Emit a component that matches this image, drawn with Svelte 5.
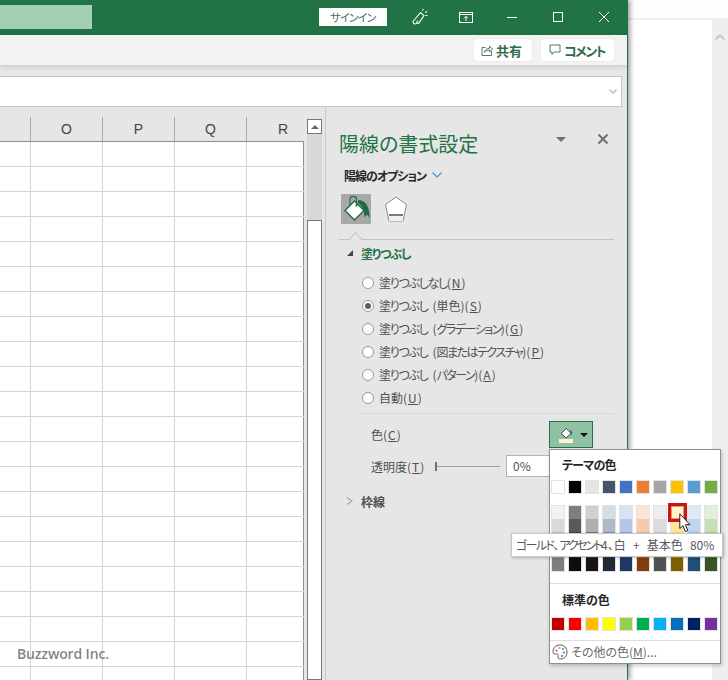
<script>
  const columns = ['O', 'P', 'Q', 'R'];
  const rows = Array.from({ length: 22 }, (_, i) => i);

  // tightHead / tightNote: kana runs that sit narrower than the font's own widths
  const radios = [
    { head: '塗りつぶしなし', tightHead: true, key: 'N' },
    { head: '塗りつぶし', tightHead: true, note: '単色', key: 'S', checked: true },
    { head: '塗りつぶし', tightHead: true, note: 'グラデーション', tightNote: true, key: 'G' },
    { head: '塗りつぶし', tightHead: true, note: '図またはテクスチャ', tightNote: true, key: 'P' },
    { head: '塗りつぶし', tightHead: true, note: 'パターン', tightNote: true, key: 'A' },
    { head: '自動', key: 'U' }
  ];

  const themeColors = ['#ffffff', '#000000', '#e7e6e6', '#44546a', '#4472c4', '#ed7d31', '#a5a5a5', '#ffc000', '#5b9bd5', '#70ad47'];
  const tints = [
    ['#f2f2f2', '#d9d9d9', '#bfbfbf', '#a6a6a6', '#7f7f7f'],
    ['#7f7f7f', '#595959', '#404040', '#262626', '#0d0d0d'],
    ['#d0d0d0', '#aeaeae', '#767676', '#3b3b3b', '#171717'],
    ['#d6dce4', '#adb9ca', '#8497b0', '#333f4f', '#222b35'],
    ['#d9e2f3', '#b4c6e7', '#8eaadb', '#2f5496', '#1f3864'],
    ['#fbe4d5', '#f7caac', '#f4b083', '#c55a11', '#833c0b'],
    ['#ededed', '#dbdbdb', '#c9c9c9', '#7b7b7b', '#525252'],
    ['#fff2cc', '#ffe599', '#ffd966', '#bf9000', '#7f6000'],
    ['#deeaf6', '#bdd6ee', '#9cc2e5', '#2e74b5', '#1f4e79'],
    ['#e2efd9', '#c5e0b3', '#a8d08d', '#538135', '#375623']
  ];
  const standardColors = ['#c00000', '#ff0000', '#ffc000', '#ffff00', '#92d050', '#00b050', '#00b0f0', '#0070c0', '#002060', '#7030a0'];
</script>

<div class="screen">
  <div class="window">
    <header class="titlebar">
      <div class="namebox"></div>
      <button class="signin">サインイン</button>
      <svg class="tb-icon coauthor" viewBox="0 0 18 18" width="18" height="18" fill="none" stroke="#fff" stroke-width="1.1">
        <path d="M2 13.5 9.5 4.5 13 7.5 7.5 15.5 5.8 14.8 4.8 16 2.5 15.5 Z" />
        <path d="M5.5 14.5 7 12.5M11.5 2.5 12.2 1M14 4.5 16 3.5M14.5 7.5 16.5 7.5" />
      </svg>
      <svg class="tb-icon display" viewBox="0 0 14 11" width="14" height="11" fill="none" stroke="#fff" stroke-width="1">
        <rect x="0.5" y="0.5" width="13" height="10" />
        <path d="M0.5 2.5H13.5M7 9V4.5M5 6.3 7 4.3 9 6.3" />
      </svg>
      <svg class="tb-icon minimize" viewBox="0 0 10 10" width="10" height="10" stroke="#fff" stroke-width="1"><path d="M0 5.5H10" /></svg>
      <svg class="tb-icon maximize" viewBox="0 0 10 10" width="10" height="10" fill="none" stroke="#fff" stroke-width="1"><rect x="0.5" y="0.5" width="9" height="9" /></svg>
      <svg class="tb-icon close" viewBox="0 0 10 10" width="10" height="10" stroke="#fff" stroke-width="1"><path d="M0 0 10 10M10 0 0 10" /></svg>
    </header>

    <div class="ribbon">
      <button class="rb-btn share">
        <svg viewBox="0 0 12 12" width="12" height="12" fill="none" stroke="#4f7f66" stroke-width="1">
          <path d="M4.5 3.5H1V11.5H10.5V7" />
          <path d="M3.5 8.5C4 5.5 6 4.3 8.5 4.3V2L11.5 5 8.5 8V6C6.5 6 5 6.8 3.5 8.5Z" />
        </svg>
        共有
      </button>
      <button class="rb-btn comment">
        <svg viewBox="0 0 12 12" width="12" height="12" fill="none" stroke="#4f7f66" stroke-width="1">
          <path d="M1 1H11V8H5L3 10.5V8H1Z" />
        </svg>
        コメント
      </button>
    </div>

    <div class="workspace">
      <div class="formula">
        <svg viewBox="0 0 8 5" width="8" height="5" fill="none" stroke="#c4c4c4" stroke-width="1.6"><path d="M0.5 0.5 4 4 7.5 0.5" /></svg>
      </div>

      <div class="main">
        <div class="sheet">
          <div class="col-head">
            <div class="head-cell first"></div>
            {#each columns as col}
              <div class="head-cell">{col}</div>
            {/each}
          </div>
          <div class="cells">
            {#each rows as row (row)}
              <div class="cell first"></div>
              {#each columns as col (col)}
                <div class="cell"></div>
              {/each}
            {/each}
          </div>
        </div>

        <div class="scrollbar">
          <div class="sb-up"><span class="sb-arrow"></span></div>
          <div class="sb-thumb"></div>
        </div>

        <aside class="pane">
          <div class="pane-title">
            <h1>陽線の書式設定</h1>
            <span class="pane-menu"></span>
            <svg class="pane-close" viewBox="0 0 10 10" width="10" height="10" stroke="#6e6e6e" stroke-width="2"><path d="M0.5 0.5 9.5 9.5M9.5 0.5 0.5 9.5" /></svg>
          </div>

          <div class="options">
            陽線のオプション
            <svg viewBox="0 0 10 6" width="10" height="6" fill="none" stroke="#4a90d0" stroke-width="1.1"><path d="M0.5 0.5 5 5 9.5 0.5" /></svg>
          </div>

          <div class="tabs">
            <div class="tab selected">
              <svg viewBox="0 0 30 30" width="30" height="30">
                <path d="M17 6C24 6 29 12 28.5 24L26 20.5 23 23.5C24 18 22 12 17 9Z" fill="#1f6b43" />
                <path d="M13.5 7 23 16.5 13.5 26 4 16.5Z" fill="#fff" stroke="#1f6b43" stroke-width="1.4" />
                <path d="M9 11V5C9 1.5 15.5 1.5 15.5 5V11" fill="none" stroke="#1f6b43" stroke-width="1.1" />
                <circle cx="15.5" cy="11.5" r="1.1" fill="#1f6b43" />
              </svg>
            </div>
            <div class="tab">
              <svg viewBox="0 0 30 30" width="30" height="30">
                <path d="M15 3 25.5 10.5 22 27H8L4.5 10.5Z" fill="#fff" stroke="#8a8a8a" stroke-width="1" />
                <path d="M8 21H22" stroke="#7a7a7a" stroke-width="2" />
                <path d="M8.6 22H21.4L22 27H8Z" fill="#f0f0f0" />
              </svg>
            </div>
          </div>

          <div class="tab-rule"><span class="notch"></span></div>

          <div class="section open">
            <span class="tri-open"></span>
            塗りつぶし
          </div>

          <div class="radios">
            {#each radios as r}
              <label class="radio">
                <span class="dot" class:checked={r.checked}></span>
                <span><span class:tight={r.tightHead}>{r.head}</span>{#if r.note}<span class="note">(<span class:tight-note={r.tightNote}>{r.note}</span>)</span>{/if}<span class="key">(<u>{r.key}</u>)</span></span>
              </label>
            {/each}
          </div>

          <div class="inner-rule"></div>

          <div class="form-row color-row">
            <span class="form-label">色<span class="key">(<u>C</u>)</span></span>
            <div class="color-btn">
              <svg viewBox="0 0 18 16" width="18" height="16">
                <path d="M9.5 1.5 14 6.5 9 11 4 6.5Z" fill="#fff" stroke="#444" stroke-width="1" />
                <path d="M13 2.5C15 4 15.5 6 15 8L13.5 6.5Z" fill="#1f6b8c" />
                <rect x="2" y="12" width="14" height="4" fill="#fff2cc" />
              </svg>
              <span class="caret"></span>
            </div>
          </div>

          <div class="form-row alpha-row">
            <span class="form-label">透明度<span class="key">(<u>T</u>)</span></span>
            <div class="slider"><span class="tick"></span></div>
            <div class="pct">0%</div>
          </div>

          <div class="section closed">
            <span class="tri-closed"></span>
            枠線
          </div>
        </aside>
      </div>
    </div>
  </div>

  <div class="outside">
    <div class="out-top"></div>
    <div class="out-body">
      <div class="out-page"></div>
      <div class="out-strip">
        <svg viewBox="0 0 10 6" width="10" height="6" fill="none" stroke="#c4c4c4" stroke-width="1.8"><path d="M0.5 5.5 5 1 9.5 5.5" /></svg>
      </div>
    </div>
  </div>

  <div class="watermark">Buzzword Inc.</div>

  <div class="popup">
    <div class="pop-head theme">テーマの色</div>
    <div class="swatches">
      {#each themeColors as c}
        <span class="swatch" style="background:{c}"></span>
      {/each}
    </div>
    <div class="swatches tints">
      {#each tints as col, i}
        <div class="tint-col">
          {#each col as c}
            <span class="tint" style="background:{c}"></span>
          {/each}
          {#if i === 7}<span class="picked"></span>{/if}
        </div>
      {/each}
    </div>
    <div class="pop-rule"></div>
    <div class="pop-head std">標準の色</div>
    <div class="swatches std-row">
      {#each standardColors as c}
        <span class="swatch" style="background:{c}"></span>
      {/each}
    </div>
    <div class="pop-rule more-rule"></div>
    <div class="more">
      <svg viewBox="0 0 16 16" width="16" height="16">
        <path d="M8 1C3.5 1 1 4 1 7.5 1 10 3 10.5 4.5 10 6 9.5 6.5 11 6 12.5 5.5 14.5 7 15 8.5 15 12.5 15 15 12 15 8 15 4 12 1 8 1Z" fill="#fff" stroke="#5a5a5a" stroke-width="1" />
        <circle cx="4.5" cy="6.5" r="1.1" fill="#c8504a" />
        <circle cx="7.5" cy="4" r="1.1" fill="#e0a030" />
        <circle cx="11" cy="5" r="1.1" fill="#5a9a50" />
        <circle cx="12" cy="8.5" r="1.1" fill="#4a7fc0" />
        <circle cx="10" cy="12" r="1.1" fill="#8a5aa8" />
      </svg>
      <span>その他の色(<u>M</u>)...</span>
    </div>
  </div>

  <div class="tooltip"><span class="tip-a">ゴールド</span>、<span class="tip-b">アクセント</span><span class="tip-gap"> </span>4、白 + 基本色 80%</div>

  <svg class="cursor" viewBox="0 0 12 20" width="12" height="20">
    <path d="M0.8 0.8V15.5L4 12.6 6.3 18.6 8.8 17.6 6.5 11.7H11Z" fill="#fff" stroke="#222" stroke-width="1" />
  </svg>
</div>

<style>
  :global(body) {
    margin: 0;
    background: #fff;
  }
  .screen {
    position: relative;
    display: flex;
    width: 728px;
    height: 680px;
    overflow: hidden;
    font-family: "Noto Sans CJK JP", "Liberation Sans", sans-serif;
    font-size: 12px;
    font-feature-settings: "palt";
    color: #505050;
  }
  u {
    text-underline-offset: 1px;
  }
  button {
    font-family: inherit;
    font-feature-settings: inherit;
    border: none;
    padding: 0;
  }

  /* window */
  .window {
    position: relative;
    z-index: 1;
    display: flex;
    flex-direction: column;
    width: 627px;
    height: 680px;
    border-right: 1px solid #217346;
    box-shadow: 2px 0 5px rgba(0, 0, 0, 0.4);
  }
  .titlebar {
    display: flex;
    align-items: center;
    flex: none;
    height: 35px;
    background: #217346;
  }
  .namebox {
    width: 92px;
    height: 24px;
    margin-top: -1px;
    background: #a3cfb4;
  }
  .signin {
    width: 68px;
    height: 18px;
    margin-left: 227px;
    margin-top: -1px;
    background: #fff;
    color: #41705a;
    font-size: 11px;
    letter-spacing: -0.8px;
    line-height: 18px;
  }
  .tb-icon {
    flex: none;
  }
  .coauthor { margin-left: 24px; margin-top: -1px; }
  .display { margin-left: 30px; margin-top: -1px; }
  .minimize { margin-left: 34px; margin-top: -1px; }
  .maximize { margin-left: 36px; margin-top: -1px; }
  .close { margin-left: 36px; margin-top: -1px; }

  .ribbon {
    display: flex;
    flex: none;
    justify-content: flex-end;
    align-items: center;
    gap: 9px;
    height: 30px;
    padding-right: 13px;
    background: #f3f2f1;
    box-shadow: 0 2px 5px rgba(0, 0, 0, 0.12);
    position: relative;
  }
  .rb-btn {
    display: flex;
    align-items: center;
    gap: 3px;
    height: 22px;
    background: #fff;
    border-radius: 2px;
    color: #2f6b4c;
    font-size: 13px;
    font-weight: 700;
    white-space: nowrap;
    box-shadow: 0 0 1px rgba(0, 0, 0, 0.25);
  }
  .share { width: 58px; padding-left: 7px; }
  .comment { width: 73px; padding-left: 8px; letter-spacing: -1.5px; }

  .workspace {
    display: flex;
    flex-direction: column;
    flex: 1;
    min-height: 0;
    padding-top: 11px;
    background: #e6e6e6;
  }
  .formula {
    display: flex;
    flex: none;
    align-items: center;
    justify-content: flex-end;
    box-sizing: border-box;
    height: 31px;
    margin-right: 5px;
    padding-right: 4px;
    background: #fff;
    border: 1px solid #c6c6c6;
    border-left: none;
  }

  .main {
    display: flex;
    flex: 1;
    min-height: 0;
  }

  /* sheet */
  .sheet {
    flex: none;
    width: 304px;
    padding-top: 10px;
    overflow: hidden;
  }
  .col-head {
    display: grid;
    grid-template-columns: 31px repeat(4, 72px);
    height: 24px;
  }
  .head-cell {
    box-sizing: border-box;
    border-right: 1px solid #ababab;
    font-family: "Liberation Sans", sans-serif;
    font-size: 14px;
    line-height: 24px;
    text-align: center;
    color: #444;
  }
  .head-cell:last-child {
    border-right: none;
  }
  .cells {
    display: grid;
    grid-template-columns: 31px 72px 72px 72px 57px;
    grid-auto-rows: 25px;
    height: 100%;
    background: #fff;
    border-top: 1px solid #8e8e8e;
    box-sizing: border-box;
    position: relative;
    border-right: 1px solid #8e8e8e;
    width: 304px;
  }
  .cell {
    box-sizing: border-box;
    border-right: 1px solid #d4d4d4;
    border-bottom: 1px solid #d4d4d4;
  }
  .cell:nth-child(5n) {
    border-right: none;
  }

  /* scrollbar */
  .scrollbar {
    display: flex;
    flex-direction: column;
    flex: none;
    box-sizing: border-box;
    width: 15px;
    margin: 12px 0 0 3px;
    background: #d8d8d8;
  }
  .sb-up {
    display: flex;
    align-items: center;
    justify-content: center;
    box-sizing: border-box;
    height: 15px;
    background: #fff;
    border: 1px solid #777;
  }
  .sb-arrow {
    border: 4px solid transparent;
    border-top: none;
    border-bottom: 4px solid #666;
  }
  .sb-thumb {
    flex: 1;
    margin-top: 86px;
    background: #fff;
    border: 1px solid #777;
  }

  /* format pane */
  .pane {
    flex: 1;
    box-sizing: border-box;
    margin-left: 3px;
    padding: 0 13px;
    border-left: 1px solid #c8c8c8;
  }
  .pane-title {
    display: flex;
    align-items: center;
    height: 28px;
    margin-top: 22px;
  }
  .pane-title h1 {
    margin: 2px 0 0;
    font-size: 20px;
    font-weight: 400;
    line-height: 28px;
    color: #217346;
  }
  .pane-menu {
    margin: -8px 0 0 78px;
    border: 5px solid transparent;
    border-top: 5px solid #707070;
    border-bottom: none;
  }
  .pane-close {
    margin: -8px 0 0 32px;
  }
  .options {
    display: flex;
    align-items: center;
    gap: 6px;
    height: 20px;
    margin-top: 8px;
    padding-left: 5px;
    font-weight: 700;
    letter-spacing: -1px;
    color: #262626;
  }
  .tabs {
    display: flex;
    gap: 10px;
    margin-top: 9px;
    padding-left: 2px;
  }
  .tab {
    width: 30px;
    height: 30px;
  }
  .tab.selected {
    background: #a8a8a6;
  }
  .tab-rule {
    position: relative;
    height: 1px;
    margin-top: 15px;
    background: #c4c4c4;
  }
  .notch {
    position: absolute;
    left: 12px;
    top: -5px;
    width: 8px;
    height: 8px;
    background: #e6e6e6;
    border-left: 1px solid #c4c4c4;
    border-top: 1px solid #c4c4c4;
    transform: rotate(45deg);
  }
  .section {
    display: flex;
    align-items: center;
    height: 20px;
    font-weight: 700;
  }
  .section.open {
    margin-top: 3px;
    padding-left: 8px;
    letter-spacing: -1.2px;
    color: #217346;
  }
  .tri-open {
    width: 0;
    height: 0;
    margin-right: 8px;
    border-left: 6px solid transparent;
    border-bottom: 6px solid #444;
  }
  .section.closed {
    margin-top: 14px;
    padding-left: 8px;
    color: #505050;
  }
  .tri-closed {
    box-sizing: border-box;
    width: 6px;
    height: 8px;
    margin-right: 8px;
    background: #9a9a9a;
    clip-path: polygon(0 0, 100% 50%, 0 100%, 0 85%, 70% 50%, 0 15%);
  }
  .radios {
    margin-top: 8px;
    padding-left: 23px;
  }
  .radio {
    display: flex;
    align-items: center;
    gap: 5px;
    height: 23px;
    white-space: pre;
  }
  .tight {
    letter-spacing: -1.3px;
  }
  .tight-note {
    letter-spacing: -1.5px;
  }
  .note {
    margin-left: 5px;
  }
  .key {
    letter-spacing: 1px;
  }
  .dot {
    position: relative;
    flex: none;
    box-sizing: border-box;
    width: 12px;
    height: 12px;
    background: #fff;
    border: 1px solid #9a9a9a;
    border-radius: 50%;
  }
  .dot.checked::after {
    content: "";
    position: absolute;
    inset: 2px;
    border-radius: 50%;
    background: #606060;
  }
  .inner-rule {
    height: 1px;
    margin: 4px 0 0 21px;
    background: #d6d6d6;
  }
  .form-row {
    display: flex;
    align-items: center;
    margin-top: 7px;
    padding-left: 32px;
    white-space: nowrap;
  }
  .form-label {
    width: 64px;
  }
  .color-row {
    height: 27px;
  }
  .color-btn {
    display: flex;
    align-items: center;
    box-sizing: border-box;
    gap: 5px;
    width: 44px;
    height: 27px;
    margin-left: 114px;
    padding: 0 0 0 7px;
    background: #8fc2a4;
    border: 1px solid #217346;
  }
  .caret {
    border: 4px solid transparent;
    border-top: 4px solid #111;
    border-bottom: none;
  }
  .alpha-row {
    height: 22px;
  }
  .slider {
    position: relative;
    width: 65px;
    height: 1px;
    background: #a0a0a0;
  }
  .tick {
    position: absolute;
    left: 0;
    top: -4px;
    width: 2px;
    height: 9px;
    background: #707070;
  }
  .pct {
    box-sizing: border-box;
    width: 60px;
    height: 22px;
    margin-left: 6px;
    padding-left: 6px;
    background: #fff;
    border: 1px solid #b4b4b4;
    line-height: 20px;
  }

  /* behind the window */
  .outside {
    display: flex;
    flex-direction: column;
    flex: 1;
  }
  .out-top {
    flex: none;
    height: 18px;
    background: #fdfdfd;
    border-bottom: 2px solid #f0f0f0;
  }
  .out-body {
    display: flex;
    flex: 1;
  }
  .out-page {
    flex: 1;
    background: #fff;
  }
  .out-strip {
    flex: none;
    width: 16px;
    padding: 6px 0 0 3px;
    box-sizing: border-box;
    background: #efefef;
  }

  .watermark {
    position: absolute;
    z-index: 2;
    left: 17px;
    top: 644px;
    font-family: "Open Sans", "Liberation Sans", sans-serif;
    font-size: 14px;
    font-weight: 600;
    letter-spacing: -0.15px;
    line-height: 20px;
    color: rgba(90, 90, 90, 0.75);
  }

  /* colour popup */
  .popup {
    position: absolute;
    z-index: 3;
    left: 549px;
    top: 449px;
    box-sizing: border-box;
    width: 172px;
    height: 215px;
    background: #fff;
    border: 1px solid #8e8e8e;
    box-shadow: 1px 2px 4px rgba(0, 0, 0, 0.2);
  }
  .pop-head {
    height: 20px;
    margin-top: 5px;
    padding-left: 12px;
    font-weight: 700;
    line-height: 20px;
    color: #262626;
  }
  .pop-head.theme {
    letter-spacing: -0.8px;
  }
  .swatches {
    display: flex;
    gap: 5px;
    margin-top: 6px;
    padding-left: 2px;
  }
  .swatch {
    flex: none;
    box-sizing: border-box;
    width: 12px;
    height: 12px;
    outline: 1px solid #e2e2e2;
  }
  .tints {
    margin-top: 13px;
  }
  .tint-col {
    position: relative;
    display: flex;
    flex-direction: column;
    width: 12px;
    outline: 1px solid #e2e2e2;
  }
  .tint {
    height: 13px;
  }
  .picked {
    position: absolute;
    left: -3px;
    top: -3px;
    width: 13px;
    height: 13px;
    background: #fff2cc;
    border: 3px solid #c8141c;
    outline: 1px solid #e8a050;
    outline-offset: -4px;
  }
  .pop-rule {
    height: 1px;
    margin-top: 12px;
    background: #dcdcdc;
  }
  .pop-head.std {
    margin-top: 6px;
  }
  .std-row {
    margin-top: 8px;
  }
  .more-rule {
    margin-top: 10px;
  }
  .more {
    display: flex;
    align-items: center;
    gap: 3px;
    height: 21px;
    padding-left: 2px;
    color: #6a6a6a;
  }

  .tooltip {
    position: absolute;
    z-index: 4;
    left: 511px;
    top: 533px;
    box-sizing: border-box;
    width: 212px;
    height: 24px;
    padding-left: 4px;
    background: #fff;
    border: 1px solid #c8c8c8;
    box-shadow: 1px 1px 3px rgba(0, 0, 0, 0.25);
    font-size: 12px;
    word-spacing: 4.5px;
    line-height: 22px;
    color: #575757;
    white-space: nowrap;
  }
  .tip-a {
    letter-spacing: -1.6px;
  }
  .tip-b {
    letter-spacing: -2.2px;
  }
  .tip-gap {
    word-spacing: 0;
    letter-spacing: 3px;
  }
  .cursor {
    position: absolute;
    z-index: 5;
    left: 679px;
    top: 513px;
  }
</style>
